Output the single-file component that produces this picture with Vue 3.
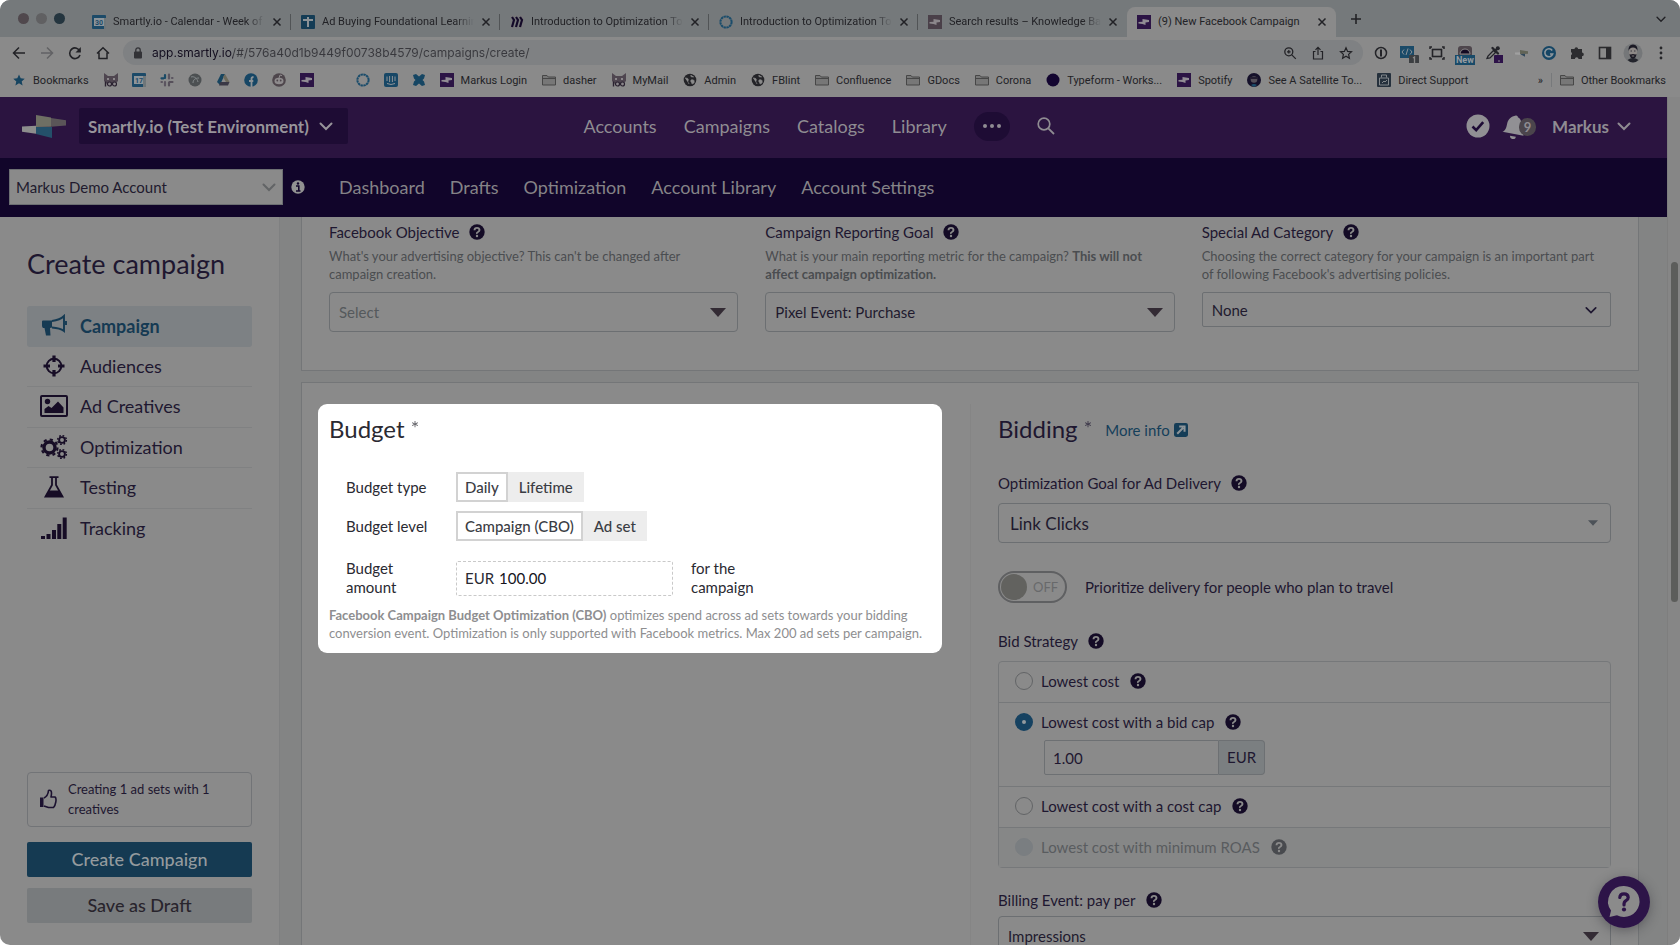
<script setup>
import { ref } from 'vue'

const tabs = [
  { icon: 'cal-30', label: 'Smartly.io - Calendar - Week of Jan' },
  { icon: 'plus-box', label: 'Ad Buying Foundational Learning' },
  { icon: 'miro', label: 'Introduction to Optimization Tools' },
  { icon: 'ring', label: 'Introduction to Optimization Tools' },
  { icon: 'smartly-dim', label: 'Search results – Knowledge Base' },
  { icon: 'smartly', label: '(9) New Facebook Campaign', active: true },
]

const bookmarks = [
  { icon: 'star-fill', label: 'Bookmarks' },
  { icon: 'cat' },
  { icon: 'cal-17' },
  { icon: 'slack' },
  { icon: 'ball' },
  { icon: 'drive' },
  { icon: 'facebook' },
  { icon: 'reddit' },
  { icon: 'smartly' },
  { icon: 'blank' },
  { icon: 'ring' },
  { icon: 'intercom' },
  { icon: 'confluence' },
  { icon: 'smartly', label: 'Markus Login' },
  { icon: 'folder', label: 'dasher' },
  { icon: 'cat', label: 'MyMail' },
  { icon: 'globe', label: 'Admin' },
  { icon: 'globe', label: 'FBlint' },
  { icon: 'folder', label: 'Confluence' },
  { icon: 'folder', label: 'GDocs' },
  { icon: 'folder', label: 'Corona' },
  { icon: 'disc', label: 'Typeform - Works...' },
  { icon: 'smartly', label: 'Spotify' },
  { icon: 'satellite', label: 'See A Satellite To...' },
  { icon: 'support', label: 'Direct Support' },
]

const extensions = ['onepass', 'code', 'capture', 'new', 'picker', 'smart-flag', 'grammar', 'puzzle', 'panel', 'avatar', 'kebab']

const steps = [
  { icon: 'horn', label: 'Campaign', active: true },
  { icon: 'target', label: 'Audiences' },
  { icon: 'image', label: 'Ad Creatives' },
  { icon: 'gears', label: 'Optimization' },
  { icon: 'flask', label: 'Testing' },
  { icon: 'bars', label: 'Tracking' },
]

const url = ref('app.smartly.io/#/576a40d1b9449f00738b4579/campaigns/create/')
const budgetType = ref('Daily')
const budgetLevel = ref('Campaign (CBO)')
const amount = ref('100.00')
const bidCap = ref('1.00')
const strategy = ref('bid')
const travel = ref(false)
</script>

<template>
  <svg class="defs" aria-hidden="true">
    <symbol id="cal-30" viewBox="0 0 14 14"><rect width="14" height="14" rx="1" fill="#1c4a68" /><rect x="2" y="3" width="10" height="8" fill="#8d9499" /><path d="M12 3h2v11h-2z" fill="#6f7679" /><text x="7" y="10" font-size="7" font-weight="700" text-anchor="middle" fill="#1c4a68">30</text></symbol>
    <symbol id="cal-17" viewBox="0 0 14 14"><rect width="14" height="14" rx="1" fill="#1c4a68" /><rect x="2" y="3" width="9" height="8" fill="#8d9499" /><path d="M11 3h3v11h-3z" fill="#6f7679" /><text x="7" y="10" font-size="7" font-weight="700" text-anchor="middle" fill="#1c4a68">17</text></symbol>
    <symbol id="plus-box" viewBox="0 0 14 14"><rect width="14" height="14" rx="1" fill="#143c55" /><path d="M7 2v10M2 5h10" stroke="#8c9296" stroke-width="2" /></symbol>
    <symbol id="miro" viewBox="0 0 14 14"><rect width="14" height="14" rx="1" fill="#77787a" /><path d="M2 2l2 3-2 7M6 2l2 3-2 7M10 2l2 3-2 7" stroke="#140a28" stroke-width="2.2" fill="none" /></symbol>
    <symbol id="ring" viewBox="0 0 14 14"><circle cx="7" cy="7" r="5.6" fill="none" stroke="#1a4c6b" stroke-width="2" stroke-dasharray="2.4 .5" /></symbol>
    <symbol id="smartly-dim" viewBox="0 0 14 14"><rect width="14" height="14" fill="#4a4049" /><path d="M1.500 7l4-.3V4l6.500 1v2l-3.500.4V10l-3-1-4-.5z" fill="#8b878b" /></symbol>
    <symbol id="smartly" viewBox="0 0 14 14"><rect width="14" height="14" fill="#2c1445" /><path d="M1.500 7l4-.3V4l6.500 1v2l-3.500.4V10l-3-1-4-.5z" fill="#918c94" /></symbol>
    <symbol id="star-fill" viewBox="0 0 14 14"><path d="M7 1.500l1.700 3.800 4 .4-3 2.700.9 4L7 10.300l-3.600 2.100.9-4-3-2.700 4-.4z" fill="#164460" /></symbol>
    <symbol id="cat" viewBox="0 0 14 14"><path d="M0 0l4 3h6l4-3v8l-3 3H3L0 8z" fill="#4f4650" /><path d="M3 5h2v2H3zM9 5h2v2H9z" fill="#8b878b" /><path d="M1.500 8.500v5" stroke="#2a2230" stroke-width="1.400" /><g fill="#8b878b" stroke="#2a2230" stroke-width="1.200"><circle cx="5.500" cy="11" r="2" /><circle cx="10.500" cy="11" r="2" /></g></symbol>
    <symbol id="slack" viewBox="0 0 14 14"><g stroke-width="2.200" stroke-linecap="round"><path d="M5 2v3M1.500 5.300h2" stroke="#1a4a66" /><path d="M9 1.500v4M12 5h.5" stroke="#5b5560" /><path d="M5 9v3.500M1.500 9h.5" stroke="#5b5560" /><path d="M9 9.500v3M9.500 9h3" stroke="#56505a" /></g></symbol>
    <symbol id="ball" viewBox="0 0 14 14"><circle cx="7" cy="7" r="6.500" fill="#4c5052" /><path d="M3 4c3-1 6 1 7 5M5 10c0-3 2-5 6-5" stroke="#83888a" fill="none" /></symbol>
    <symbol id="drive" viewBox="0 0 14 14"><path d="M5 1h4l-5 11-3-3z" fill="#174560" /><path d="M9 1l4.500 8H10L7 4z" fill="#6d6a5c" /><path d="M4.500 9h9L12 12.500H3z" fill="#3a3845" /></symbol>
    <symbol id="facebook" viewBox="0 0 14 14"><circle cx="7" cy="7" r="6.800" fill="#164665" /><path d="M7.500 14V5.500Q7.500 4 9.500 4M5 8h4.300" stroke="#8d9397" stroke-width="1.800" fill="none" /></symbol>
    <symbol id="reddit" viewBox="0 0 14 14"><circle cx="7" cy="7" r="6.800" fill="#4e464c" /><ellipse cx="7" cy="8" rx="4.500" ry="3.200" fill="#8e8b8d" /><circle cx="5.300" cy="7.500" r=".9" fill="#4e464c" /><circle cx="8.700" cy="7.500" r=".9" fill="#4e464c" /><path d="M7 5l1-3 2 .6" stroke="#8e8b8d" fill="none" /></symbol>
    <symbol id="blank" viewBox="0 0 14 14" />
    <symbol id="intercom" viewBox="0 0 14 14"><rect width="14" height="14" rx="2" fill="#174766" /><path d="M3 3.500v4.500M5.600 3v6M8.400 3v6M11 3.500v4.500M3 10.500q4 2 8 0" stroke="#8d9397" fill="none" /></symbol>
    <symbol id="confluence" viewBox="0 0 14 14"><path d="M1 2l3-1 3 2.500L10 1l3 1-1 3.500L10.500 7l1.500 1.500 1 3.500-3 1-3-2.500L4 13l-3-1 1-3.500L3.500 7 2 5.500z" fill="#164663" /></symbol>
    <symbol id="folder" viewBox="0 0 14 14"><path d="M.5 12V2.500h4.500l1.300 1.500h7.200v8z" fill="#777" stroke="#474747" /><path d="M.5 5.500h13" stroke="#474747" /></symbol>
    <symbol id="globe" viewBox="0 0 14 14"><circle cx="7" cy="7" r="6.300" fill="#242428" /><path d="M2 5c3 0 4 1 3 3s1 1 1 3M8 2c-1 2 1 2 3 2M8 7c2-1 4 0 3 3L9 11c0-2-2-2-1-4z" stroke="#8a8a8a" fill="#8a8a8a" stroke-width=".6" /></symbol>
    <symbol id="disc" viewBox="0 0 14 14"><circle cx="7" cy="7" r="6.500" fill="#130530" /></symbol>
    <symbol id="satellite" viewBox="0 0 14 14"><circle cx="7" cy="7" r="7" fill="#15102a" /><circle cx="7" cy="6.500" r="3.300" fill="#55505a" /><path d="M3 4h8v2H3z" fill="#221c30" /><path d="M4 12q3-2 6 0l-3 2z" fill="#1a4c6b" /></symbol>
    <symbol id="support" viewBox="0 0 14 14"><rect width="14" height="14" rx="1" fill="#25303c" /><path d="M2.500 5h9v7h-9zM4.500 4.500V2h5v2.500" stroke="#83888c" fill="none" /><path d="M5 10l2-2 1 1 2-2" stroke="#83888c" fill="none" /></symbol>

    <symbol id="x" viewBox="0 0 10 10"><path d="M1.500 1.500l7 7M8.500 1.500l-7 7" stroke="currentColor" stroke-width="1.500" /></symbol>
    <symbol id="plus" viewBox="0 0 14 14"><path d="M7 2v10M2 7h10" stroke="currentColor" stroke-width="1.600" /></symbol>
    <symbol id="chev" viewBox="0 0 14 14"><path d="M1.500 4.500L7 10l5.500-5.500" stroke="currentColor" stroke-width="2" fill="none" stroke-linecap="round" /></symbol>
    <symbol id="back" viewBox="0 0 14 14"><path d="M13 7H1.500M7 1.500L1.500 7 7 12.500" stroke="currentColor" stroke-width="1.500" fill="none" /></symbol>
    <symbol id="forward" viewBox="0 0 14 14"><path d="M1 7h11.500M7 1.500L12.500 7 7 12.500" stroke="currentColor" stroke-width="1.500" fill="none" /></symbol>
    <symbol id="reload" viewBox="0 0 14 14"><path d="M12 5.500A5.300 5.300 0 1 0 12 9" stroke="currentColor" stroke-width="1.600" fill="none" /><path d="M12.800 1v5.500H7.500z" fill="currentColor" /></symbol>
    <symbol id="home" viewBox="0 0 14 14"><path d="M1 7.500L7 1.800l6 5.700M3 6.500V12.500h8V6.500" stroke="currentColor" stroke-width="1.500" fill="none" /></symbol>
    <symbol id="lock" viewBox="0 0 14 14"><rect x="3" y="5.500" width="8" height="7" rx="1" fill="currentColor" /><path d="M4.800 6V4a2.200 2.200 0 0 1 4.400 0v2" stroke="currentColor" stroke-width="1.300" fill="none" /></symbol>
    <symbol id="zoom" viewBox="0 0 14 14"><circle cx="5.800" cy="5.800" r="4" stroke="currentColor" stroke-width="1.300" fill="none" /><path d="M8.800 8.800l4 4M4 5.800h3.600M5.800 4v3.600" stroke="currentColor" stroke-width="1.200" /></symbol>
    <symbol id="share" viewBox="0 0 14 14"><path d="M4.500 5.500H2.500v7.500h9V5.500h-2M7 9V1.500M4.500 3.800L7 1.300l2.500 2.500" stroke="currentColor" stroke-width="1.200" fill="none" /></symbol>
    <symbol id="star" viewBox="0 0 14 14"><path d="M7 1.800l1.600 3.600 3.900.4-2.900 2.600.8 3.900L7 10.300l-3.400 2 .8-3.900L1.500 5.800l3.900-.4z" fill="none" stroke="currentColor" stroke-width="1.200" /></symbol>

    <symbol id="onepass" viewBox="0 0 20 20"><circle cx="10" cy="10" r="5.500" stroke="#242428" stroke-width="1.500" fill="none" /><path d="M10 6.500v7" stroke="#242428" stroke-width="2" /></symbol>
    <symbol id="code" viewBox="0 0 20 20"><rect x="1" y="3" width="14" height="12" fill="#1a4a68" /><path d="M5 6.500L3 9l2 2.500M9 5.500L7 12M11 6.500L13 9l-2 2.500" stroke="#8a9298" fill="none" /><rect x="10" y="12" width="10" height="10" rx="1" fill="#3c3f42" /><path d="M14 15l1.500-1v6" stroke="#8a8a8a" stroke-width="1.300" fill="none" /></symbol>
    <symbol id="capture" viewBox="0 0 20 20"><path d="M3 6V4h2M15 4h2v2M17 14v2h-2M5 16H3v-2" stroke="#242428" stroke-width="1.500" fill="none" /><rect x="5.500" y="6.500" width="9" height="7" stroke="#242428" stroke-width="1.600" fill="none" /></symbol>
    <symbol id="new" viewBox="0 0 20 20"><rect x="3" y="3" width="14" height="12" rx="3" fill="#4e464c" /><path d="M5 11a5 5 0 0 1 10 0z" fill="#140a22" stroke="#898687" /></symbol>
    <symbol id="picker" viewBox="0 0 20 20"><path d="M4 15.500L5 13l5.500-5.500 2 2L7 15z" stroke="#24242a" stroke-width="1.300" fill="none" /><path d="M9.500 5l5.500 5.500M12 8l3-3" stroke="#24242a" stroke-width="2.400" stroke-linecap="round" /><circle cx="14.800" cy="5.200" r="2" fill="#24242a" /><rect x="11" y="12" width="10" height="10" rx="1" fill="#2d1249" /><path d="M15 18h2" stroke="#8a8a8a" /></symbol>
    <symbol id="smart-flag" viewBox="0 0 20 20"><path d="M4 9.500l6-.3V12l-6-.6z" fill="#a0a0a0" /><path d="M9 7l8 1.300v2.500L9 11z" fill="#626456" /><path d="M9 11l5-.3v3z" fill="#31485a" /></symbol>
    <symbol id="grammar" viewBox="0 0 20 20"><circle cx="10" cy="10" r="7" fill="#164665" /><path d="M13.200 7.500a4 4 0 1 0 .5 3.500H11" stroke="#8e979d" stroke-width="1.600" fill="none" /></symbol>
    <symbol id="puzzle" viewBox="0 0 20 20"><path d="M4 6h3.500a1.800 1.800 0 1 1 3.600 0H15v3.600a1.800 1.800 0 1 1 0 3.600V16h-3.500a1.800 1.800 0 0 0-3.600 0H4v-3.800a1.800 1.800 0 0 0 0-3.200z" fill="#2c2c2f" /></symbol>
    <symbol id="panel" viewBox="0 0 20 20"><rect x="4.500" y="4.500" width="11" height="11" stroke="#2a2a2d" stroke-width="1.600" fill="none" /><path d="M11 4h5v12h-5z" fill="#2a2a2d" /></symbol>
    <symbol id="avatar" viewBox="0 0 20 20"><circle cx="10" cy="10" r="9.500" fill="#757779" /><path d="M4.500 17q5.500-4 11 0-5.500 5-11 0z" fill="#23242c" /><ellipse cx="10" cy="9" rx="4" ry="5.500" fill="#8d8886" /><path d="M5.500 8Q5 1.500 10 1.500T14.500 8Q13.500 4.500 10 4.500T5.500 8zM6.500 11l1 .5q2.500-1 5 0l1-.5q-.5 4.500-3.500 4.500T6.500 11z" fill="#1b1924" /><path d="M7.500 8h1.500M11 8h1.500" stroke="#3b3840" /><path d="M8.800 13h2.400" stroke="#7d7877" /></symbol>
    <symbol id="kebab" viewBox="0 0 20 20"><circle cx="10" cy="5" r="1.400" fill="#262629" /><circle cx="10" cy="10" r="1.400" fill="#262629" /><circle cx="10" cy="15" r="1.400" fill="#262629" /></symbol>

    <symbol id="logo" viewBox="0 0 44 23"><path d="M0 11.500l14-.7v8L0 16.700z" fill="#8d8d8d" /><path d="M14 0l15 2.500v9.300L14 12z" fill="#6f6f64" /><path d="M29 3l15 2.200v5.400l-15 1.200z" fill="#5a5558" /><path d="M14 12h16v11l-16-4z" fill="#24506a" /></symbol>
    <symbol id="dots" viewBox="0 0 20 6"><circle cx="3" cy="3" r="2" fill="currentColor" /><circle cx="10" cy="3" r="2" fill="currentColor" /><circle cx="17" cy="3" r="2" fill="currentColor" /></symbol>
    <symbol id="search" viewBox="0 0 18 18"><circle cx="7" cy="7" r="5.800" stroke="currentColor" stroke-width="1.700" fill="none" /><path d="M11.300 11.300L17 17" stroke="currentColor" stroke-width="1.800" /></symbol>
    <symbol id="check" viewBox="0 0 24 24"><circle cx="12" cy="12" r="11.500" fill="#919094" /><path d="M6.500 12.500l3.700 3.700 7-8" stroke="#1d0b35" stroke-width="2.600" fill="none" /></symbol>
    <symbol id="bell" viewBox="0 0 22 26"><path d="M14 1.500a1.700 1.700 0 0 1 2 2c4 2 4 6 4 11l2 8L0 18.500c4-2 4-5 5-9s4-7 9-8zM8 22.500l6 1.200a3 3 0 0 1-6-1.200z" fill="#919094" /></symbol>
    <symbol id="info" viewBox="0 0 14 14"><circle cx="7" cy="7" r="6.700" fill="#929292" /><path d="M5 6h2.800v5M5 11h4.500" stroke="#11052a" stroke-width="1.600" fill="none" /><circle cx="7" cy="3.500" r="1.200" fill="#11052a" /></symbol>
    <symbol id="help" viewBox="0 0 16 16"><circle cx="8" cy="8" r="7.700" fill="currentColor" /><path d="M5.500 6.200Q5.600 3.900 8 3.900t2.500 2.200Q10.500 7.300 9 8T8 9.800" stroke="#8a8a8a" stroke-width="1.900" fill="none" /><circle cx="8" cy="12" r="1.200" fill="#8a8a8a" /></symbol>
    <symbol id="tri" viewBox="0 0 16 9"><path d="M0 0h16L8 9z" fill="currentColor" /></symbol>
    <symbol id="ext" viewBox="0 0 13 13"><rect width="13" height="13" rx="2" fill="#153d57" /><path d="M3 10l5.500-5.500M4.800 3.200h5v5" stroke="#8d9498" stroke-width="1.900" fill="none" /></symbol>

    <symbol id="horn" viewBox="0 0 28 24"><path d="M2 7.500Q2 6.500 3 6.500h9v7l-2 .5.500 7.500H6L4.500 14H3Q2 13 2 11.500z" fill="#153a53" /><path d="M12 7q8-1 12-5v15q-4-3-12-3.500M26 7v4" stroke="#153a53" stroke-width="1.900" fill="none" /></symbol>
    <symbol id="target" viewBox="0 0 28 24"><circle cx="14" cy="12" r="7.300" stroke="#170d26" stroke-width="2" fill="none" /><path d="M14 1.500v6.500M14 16v6.500M3.500 12H10M18 12h6.500" stroke="#170d26" stroke-width="3.200" /></symbol>
    <symbol id="image" viewBox="0 0 28 24"><rect x="1" y="2" width="26" height="20" rx="1" stroke="#170d26" stroke-width="2" fill="none" /><circle cx="7.500" cy="7.500" r="2.700" fill="#170d26" /><path d="M4.500 19v-4l4-3 3 2L18 7.500l5.500 6V19z" fill="#170d26" /></symbol>
    <symbol id="gears" viewBox="0 0 28 24"><circle cx="9.500" cy="12.500" r="5.500" stroke="#170d26" stroke-width="3.400" fill="none" /><circle cx="9.500" cy="12.500" r="8" stroke="#170d26" stroke-width="2.200" stroke-dasharray="3.140 3.140" fill="none" /><g stroke="#170d26" fill="none"><circle cx="22" cy="5" r="2.900" stroke-width="1.900" /><circle cx="22" cy="5" r="4.400" stroke-width="1.400" stroke-dasharray="1.730 1.730" /><circle cx="22" cy="19" r="2.900" stroke-width="1.900" /><circle cx="22" cy="19" r="4.400" stroke-width="1.400" stroke-dasharray="1.730 1.730" /></g></symbol>
    <symbol id="flask" viewBox="0 0 28 24"><path d="M9.500 2.200h9M12 2v8L5.500 21.500h17L16 10V2" stroke="#170d26" stroke-width="1.800" fill="none" /><path d="M8.800 15.500h10.400L23 22H5z" fill="#170d26" /></symbol>
    <symbol id="bars" viewBox="0 0 28 24"><path d="M1 20h4v3H1zM6.500 18h4v5h-4zM12 14h4v9h-4zM17.300 8h4v15h-4zM22.700 1.500h4V23h-4z" fill="#170d26" /></symbol>
    <symbol id="thumb" viewBox="0 0 18 20"><path d="M1 8.500h3.500V18H1z" fill="#1c1230" /><path d="M5 9q4-2 4.500-7.500 3-1 3 2.500 0 2-.5 4h4q1.500 1 .8 5t-2.300 5.500H9.500L5 17" stroke="#1c1230" stroke-width="1.600" fill="none" stroke-linejoin="round" /></symbol>
    <symbol id="chat" viewBox="0 0 52 52"><circle cx="26" cy="26" r="26" fill="#2d1448" /><path d="M26 10a15.500 15.500 0 1 1-7 29.300L11.500 41l1.500-6.500A15.500 15.500 0 0 1 26 10z" fill="#8b8b8b" /><path d="M21.800 21.500Q22 17.800 26 17.800t4.200 3.600q0 2-2.200 3.200t-2 4.400" stroke="#2d1448" stroke-width="3.200" fill="none" stroke-linecap="round" /><circle cx="26" cy="33.500" r="2.100" fill="#2d1448" /></symbol>
  </svg>

  <div class="window">
    <div class="tabbar">
      <div class="lights"><i class="red" /><i class="yellow" /><i class="green" /></div>
      <div class="tabs">
        <div v-for="(t, i) in tabs" :key="i" class="tab" :class="{ active: t.active, last: i === 4 }">
          <svg class="i14"><use :href="'#' + t.icon" /></svg>
          <span class="tab-label">{{ t.label }}</span>
          <button class="close" aria-label="Close tab"><svg class="i10"><use href="#x" /></svg></button>
        </div>
      </div>
      <button class="plain new-tab" aria-label="New tab"><svg class="i14"><use href="#plus" /></svg></button>
      <button class="plain tab-menu" aria-label="Tab list"><svg class="i10"><use href="#chev" /></svg></button>
    </div>

    <div class="toolbar">
      <button class="plain" aria-label="Back"><svg class="i14"><use href="#back" /></svg></button>
      <button class="plain faint" aria-label="Forward"><svg class="i14"><use href="#forward" /></svg></button>
      <button class="plain" aria-label="Reload"><svg class="i14"><use href="#reload" /></svg></button>
      <button class="plain" aria-label="Home"><svg class="i14"><use href="#home" /></svg></button>
      <div class="omnibox">
        <svg class="i14"><use href="#lock" /></svg>
        <input v-model="url" aria-label="Address" />
        <button class="plain" aria-label="Zoom"><svg class="i14"><use href="#zoom" /></svg></button>
        <button class="plain" aria-label="Share"><svg class="i14"><use href="#share" /></svg></button>
        <button class="plain" aria-label="Bookmark"><svg class="i14"><use href="#star" /></svg></button>
      </div>
      <div class="exts">
        <button v-for="e in extensions" :key="e" class="plain ext" :aria-label="e">
          <svg class="i20"><use :href="'#' + e" /></svg>
          <span v-if="e === 'new'" class="new-badge">New</span>
        </button>
      </div>
    </div>

    <div class="bookmarks">
      <a v-for="(b, i) in bookmarks" :key="i" href="#" class="bm">
        <svg class="i14"><use :href="'#' + b.icon" /></svg><span v-if="b.label">{{ b.label }}</span>
      </a>
      <a href="#" class="bm more">»</a>
      <a href="#" class="bm other"><svg class="i14"><use href="#folder" /></svg><span>Other Bookmarks</span></a>
    </div>

    <div class="page">
      <div class="app">
        <header class="top">
          <svg class="logo"><use href="#logo" /></svg>
          <button class="env">Smartly.io (Test Environment)<svg class="i14"><use href="#chev" /></svg></button>
          <nav class="main-nav">
            <a href="#">Accounts</a><a href="#">Campaigns</a><a href="#">Catalogs</a><a href="#">Library</a>
            <button class="dots" aria-label="More"><svg><use href="#dots" /></svg></button>
            <button class="plain search" aria-label="Search"><svg><use href="#search" /></svg></button>
          </nav>
          <div class="user">
            <svg class="check"><use href="#check" /></svg>
            <button class="plain bell" aria-label="Notifications"><svg><use href="#bell" /></svg><span>9</span></button>
            <button class="plain name">Markus<svg class="i14"><use href="#chev" /></svg></button>
          </div>
        </header>

        <div class="sub">
          <div class="select account">
            <select aria-label="Account"><option>Markus Demo Account</option></select>
            <svg class="i14"><use href="#chev" /></svg>
          </div>
          <svg class="i14 info"><use href="#info" /></svg>
          <nav>
            <a href="#">Dashboard</a><a href="#">Drafts</a><a href="#">Optimization</a><a href="#">Account Library</a><a href="#">Account Settings</a>
          </nav>
        </div>

        <div class="body">
          <aside>
            <h1>Create campaign</h1>
            <nav class="steps">
              <a v-for="s in steps" :key="s.label" href="#" :class="{ active: s.active }">
                <svg><use :href="'#' + s.icon" /></svg>{{ s.label }}
              </a>
            </nav>
            <div class="actions">
              <div class="note"><svg><use href="#thumb" /></svg><p>Creating 1 ad sets with 1 creatives</p></div>
              <button class="btn primary">Create Campaign</button>
              <button class="btn">Save as Draft</button>
            </div>
          </aside>

          <main>
            <section class="card goals">
              <div class="field">
                <label for="objective">Facebook Objective <svg class="help"><use href="#help" /></svg></label>
                <p>What's your advertising objective? This can't be changed after campaign creation.</p>
                <div class="select">
                  <select id="objective" class="muted"><option>Select</option></select>
                  <svg class="tri"><use href="#tri" /></svg>
                </div>
              </div>
              <div class="field">
                <label for="goal">Campaign Reporting Goal <svg class="help"><use href="#help" /></svg></label>
                <p>What is your main reporting metric for the campaign? <b>This will not affect campaign optimization.</b></p>
                <div class="select">
                  <select id="goal"><option>Pixel Event: Purchase</option></select>
                  <svg class="tri"><use href="#tri" /></svg>
                </div>
              </div>
              <div class="field">
                <label for="category">Special Ad Category <svg class="help"><use href="#help" /></svg></label>
                <p>Choosing the correct category for your campaign is an important part of following Facebook's advertising policies.</p>
                <div class="select short">
                  <select id="category"><option>None</option></select>
                  <svg class="i12"><use href="#chev" /></svg>
                </div>
              </div>
            </section>

            <section class="card split">
              <div class="left">
                <div class="budget">
                  <h2>Budget <sup>*</sup></h2>
                  <div class="row">
                    <span class="row-label">Budget type</span>
                    <div class="toggle">
                      <button v-for="o in ['Daily', 'Lifetime']" :key="o" :class="{ on: budgetType === o }" @click="budgetType = o">{{ o }}</button>
                    </div>
                  </div>
                  <div class="row">
                    <span class="row-label">Budget level</span>
                    <div class="toggle">
                      <button v-for="o in ['Campaign (CBO)', 'Ad set']" :key="o" :class="{ on: budgetLevel === o }" @click="budgetLevel = o">{{ o }}</button>
                    </div>
                  </div>
                  <div class="row amount">
                    <label class="row-label" for="amount">Budget amount</label>
                    <div class="money"><span>EUR</span><input id="amount" v-model="amount" /></div>
                    <span class="suffix">for the campaign</span>
                  </div>
                  <p><b>Facebook Campaign Budget Optimization (CBO)</b> optimizes spend across ad sets towards your bidding conversion event. Optimization is only supported with Facebook metrics. Max 200 ad sets per campaign.</p>
                </div>
              </div>

              <div class="right">
                <h2>Bidding <sup>*</sup><a href="#">More info <svg><use href="#ext" /></svg></a></h2>
                <label for="opt" class="lbl">Optimization Goal for Ad Delivery <svg class="help"><use href="#help" /></svg></label>
                <div class="select large">
                  <select id="opt"><option>Link Clicks</option></select>
                  <svg class="tri small"><use href="#tri" /></svg>
                </div>
                <label class="switch">
                  <input v-model="travel" type="checkbox" />
                  <span class="track"><i />OFF</span>
                  Prioritize delivery for people who plan to travel
                </label>
                <div class="lbl">Bid Strategy <svg class="help"><use href="#help" /></svg></div>
                <div class="strategies">
                  <div class="opt"><label><input v-model="strategy" type="radio" name="s" value="low" />Lowest cost <svg class="help"><use href="#help" /></svg></label></div>
                  <div class="opt">
                    <label><input v-model="strategy" type="radio" name="s" value="bid" />Lowest cost with a bid cap <svg class="help"><use href="#help" /></svg></label>
                    <div class="cap"><input v-model="bidCap" aria-label="Bid cap" /><span>EUR</span></div>
                  </div>
                  <div class="opt"><label><input v-model="strategy" type="radio" name="s" value="cost" />Lowest cost with a cost cap <svg class="help"><use href="#help" /></svg></label></div>
                  <div class="opt off"><label><input v-model="strategy" type="radio" name="s" value="roas" disabled />Lowest cost with minimum ROAS <svg class="help"><use href="#help" /></svg></label></div>
                </div>
                <label for="billing" class="lbl billing">Billing Event: pay per <svg class="help"><use href="#help" /></svg></label>
                <div class="select">
                  <select id="billing"><option>Impressions</option></select>
                  <svg class="tri"><use href="#tri" /></svg>
                </div>
              </div>
            </section>
          </main>
        </div>
      </div>
      <div class="scroll"><i /></div>
      <button class="plain fab" aria-label="Help"><svg><use href="#chat" /></svg></button>
    </div>
  </div>
</template>

<style>
html,
body {
  background: #fff;
}
</style>

<style scoped>
* {
  box-sizing: border-box;
}
.defs {
  position: absolute;
  width: 0;
  height: 0;
}
svg {
  display: block;
  flex: none;
  overflow: visible;
}
button,
input,
select {
  font: inherit;
  color: inherit;
  margin: 0;
  outline: none;
}
a {
  color: inherit;
  text-decoration: none;
}
p,
h1,
h2 {
  margin: 0;
  font-weight: 400;
}
.window {
  height: 100vh;
  display: flex;
  flex-direction: column;
  overflow: hidden;
  border-radius: 10px;
  background: #8a8a8a;
  color: #1e1730;
  font-family: Lato, "Liberation Sans", sans-serif;
  font-size: 15px;
}
.i10 { width: 10px; height: 10px; }
.i12 { width: 12px; height: 12px; }
.i14 { width: 14px; height: 14px; }
.i20 { width: 20px; height: 20px; }
.plain {
  border: 0;
  padding: 0;
  background: none;
  display: flex;
  align-items: center;
}

/* browser chrome */
.tabbar,
.toolbar,
.bookmarks {
  flex: none;
  display: flex;
  align-items: center;
  font-family: Roboto, "Liberation Sans", sans-serif;
  font-size: 11px;
  color: #222226;
}
.tabbar {
  height: 37px;
  background: #75797b;
  align-items: stretch;
}
.lights {
  width: 82px;
  flex: none;
  padding-left: 18px;
  display: flex;
  gap: 7px;
  align-items: center;
}
.lights i {
  width: 11px;
  height: 11px;
  border-radius: 50%;
  background: #50484d;
}
.lights .yellow { background: #606062; }
.lights .green { background: #24353f; }
.tabs {
  display: flex;
  padding-top: 7px;
}
.tab {
  width: 209px;
  display: flex;
  align-items: center;
  gap: 7px;
  padding: 0 9px 1px 10px;
  position: relative;
}
.tab::after {
  content: "";
  position: absolute;
  right: 0;
  top: 7px;
  width: 1px;
  height: 16px;
  background: #515456;
}
.tab.last::after,
.tab.active::after {
  display: none;
}
.tab.active {
  background: #8a8a8a;
  border-radius: 8px 8px 0 0;
}
.tab-label {
  flex: 1;
  overflow: hidden;
  white-space: nowrap;
  mask-image: linear-gradient(90deg, #000 88%, transparent);
}
.tab.active .tab-label {
  mask-image: none;
}
.close {
  border: 0;
  padding: 0;
  background: none;
}
.new-tab { margin-left: 13px; }
.tab-menu { margin: 0 14px 0 auto; }
.toolbar {
  height: 31px;
  padding: 0 9px 0 12px;
  gap: 14px;
}
.faint { color: #626265; }
.omnibox {
  flex: 1;
  height: 25px;
  margin-left: -1px;
  display: flex;
  align-items: center;
  gap: 14px;
  padding: 0 10px 0 8px;
  border-radius: 13px;
  background: #7f8183;
}
.omnibox > svg { color: #333337; }
.omnibox input {
  flex: 1;
  border: 0;
  padding: 0;
  margin-left: -7px;
  font-family: Inter, "Liberation Sans", sans-serif;
  font-size: 12px;
  color: transparent;
  background: linear-gradient(90deg, #120d1e 81px, #38383d 81px);
  background-clip: text;
}
.exts {
  display: flex;
  gap: 8px;
  margin-left: -6px;
}
.ext { position: relative; }
.new-badge {
  position: absolute;
  left: 0;
  top: 12px;
  padding: 0 1px;
  background: #194a68;
  color: #959ba0;
  font-size: 9px;
  line-height: 10px;
  font-weight: 700;
}
.bookmarks {
  height: 29px;
  padding: 0 13px 5px 12px;
  gap: 14px;
  white-space: nowrap;
}
.bm {
  display: flex;
  align-items: center;
  gap: 7px;
}
.bm span { padding-right: 1px; }
.more { margin-left: auto; }
.other {
  margin-left: -6px;
  padding-left: 8px;
  border-left: 1px solid #77797b;
}

/* page */
.page {
  flex: 1;
  min-height: 0;
  display: flex;
  position: relative;
}
.app {
  flex: 1;
  min-width: 0;
  display: flex;
  flex-direction: column;
}
.scroll {
  width: 13px;
  position: relative;
  background: #868686;
  border-left: 1px solid #7e7e7e;
}
.scroll i {
  position: absolute;
  left: 3px;
  top: 165px;
  width: 7px;
  height: 340px;
  border-radius: 4px;
  background: #5c5d5b;
}
.top {
  height: 61px;
  flex: none;
  display: flex;
  align-items: center;
  padding: 0 36px 3px 22px;
  background: #2b1440;
  color: #8f8c92;
  font-size: 18px;
  position: relative;
}
.logo { width: 44px; height: 23px; }
.env {
  height: 36px;
  margin-left: 13px;
  padding: 0 15px 0 9px;
  display: flex;
  align-items: center;
  gap: 10px;
  border: 0;
  border-radius: 2px;
  background: #1e0c34;
  font-size: 17px;
  font-weight: 700;
  color: #97949a;
}
.main-nav {
  position: absolute;
  left: 35%;
  display: flex;
  align-items: center;
  gap: 27px;
}
.dots {
  width: 36px;
  height: 29px;
  border: 0;
  padding: 0;
  border-radius: 15px;
  background: #1e0c34;
  display: grid;
  place-items: center;
}
.dots svg { width: 20px; height: 6px; }
.search svg { width: 18px; height: 18px; }
.user {
  margin-left: auto;
  display: flex;
  align-items: center;
}
.check { width: 24px; height: 24px; }
.bell {
  position: relative;
  margin-left: 12px;
}
.bell svg { width: 22px; height: 25px; }
.bell span {
  position: absolute;
  left: 17px;
  top: 4px;
  width: 17px;
  height: 18px;
  border-radius: 9px;
  background: #4b454c;
  font-size: 13px;
  font-weight: 700;
  line-height: 18px;
  text-align: center;
}
.name {
  margin-left: 28px;
  gap: 8px;
  font-weight: 700;
  font-size: 17px;
}
.sub {
  height: 59px;
  flex: none;
  display: flex;
  align-items: center;
  padding: 0 0 2px 9px;
  background: #11052a;
  color: #858387;
}
.sub nav {
  display: flex;
  gap: 25px;
  margin-left: 34px;
  font-size: 18px;
}
.info { margin-left: 8px; }
.select {
  position: relative;
  display: flex;
  align-items: center;
}
.select select {
  appearance: none;
  width: 100%;
  height: 40px;
  padding: 0 36px 0 9px;
  border: 1px solid #6c6f72;
  border-radius: 4px;
  background: #8a8a8a;
  color: #211a2e;
}
.select svg {
  position: absolute;
  right: 12px;
  pointer-events: none;
}
.select.account { width: 274px; }
.account select {
  height: 36px;
  border-radius: 0;
  padding-left: 6px;
}
.account svg {
  right: 7px;
  color: #626466;
}
.body {
  flex: 1;
  min-height: 0;
  display: flex;
}
aside {
  width: 279px;
  flex: none;
  padding: 29px 27px 22px;
  display: flex;
  flex-direction: column;
}
h1 {
  font-size: 27px;
  line-height: 36px;
}
.steps { margin-top: 24px; }
.steps a {
  height: 40px;
  display: flex;
  align-items: center;
  gap: 12px;
  padding: 0 0 2px 13px;
  font-size: 18px;
  border-bottom: 1px solid #808182;
}
.steps a:nth-child(odd) { height: 41px; }
.steps a:last-child { border: 0; }
.steps .active {
  background: #7d8184;
  border: 0;
  border-radius: 3px;
  color: #153a53;
  font-weight: 700;
}
.steps svg { width: 28px; height: 24px; }
.actions { margin-top: auto; }
.note {
  height: 55px;
  display: flex;
  align-items: center;
  gap: 11px;
  padding: 0 36px 2px 11px;
  border: 1px solid #727477;
  border-radius: 4px;
  font-size: 13px;
  line-height: 20px;
}
.note svg { width: 18px; height: 20px; }
.btn {
  width: 100%;
  height: 35px;
  margin-top: 11px;
  padding: 0 0 2px;
  border: 0;
  border-radius: 2px;
  background: #787b7d;
  color: #28242c;
  font-size: 18px;
  font-weight: 500;
  display: block;
}
.btn.primary {
  margin-top: 15px;
  background: #153a52;
  color: #949a9e;
}
main {
  flex: 1;
  min-width: 0;
  overflow: hidden;
  padding: 0 28px 0 21px;
  background: #838484;
  border-left: 1px solid #7f8081;
}
.card {
  background: #8a8a8a;
  border: 1px solid #747678;
}
.goals {
  display: grid;
  grid-template-columns: repeat(3, 1fr);
  gap: 27px;
  padding: 5px 27px 38px;
  border-top: 0;
}
.field label,
.lbl {
  display: flex;
  align-items: center;
  gap: 10px;
  line-height: 20px;
}
.help {
  width: 16px;
  height: 16px;
  color: #140b26;
}
.field p {
  margin: 5px 0 9px;
  padding-right: 12px;
  font-size: 13px;
  line-height: 18px;
  color: #4a4d50;
}
.muted.muted { color: #55595c; }
.tri {
  width: 16px;
  height: 9px;
  color: #332b34;
}
.short select { height: 35px; border-radius: 2px; }
.short svg { right: 14px; }
.split {
  margin-top: 11px;
  display: grid;
  grid-template-columns: 1fr 1fr;
}
.left { padding: 21px 28px 21px 16px; }
.budget {
  padding: 9px 11px 11px;
  border-radius: 9px;
  background: #fff;
  color: #2a2a32;
}
h2 {
  font-size: 24px;
  line-height: 32px;
}
sup {
  font-size: 20px;
  line-height: 0;
  vertical-align: 3px;
  opacity: .75;
}
.row {
  display: flex;
  align-items: center;
  padding-left: 17px;
  margin-top: 9px;
}
h2 + .row { margin-top: 27px; }
.row-label {
  width: 110px;
  padding-right: 40px;
  white-space: nowrap;
}
.toggle {
  display: flex;
  background: #ededed;
}
.toggle button {
  height: 30px;
  padding: 0 11px;
  border: 0;
  background: none;
  color: #3b3d44;
  font-weight: 500;
}
.toggle .on {
  padding: 0 7px;
  border: 2px solid #d2d2d2;
  background: #fff;
}
.amount {
  margin-top: 18px;
  line-height: 19px;
}
.amount .row-label,
.suffix { white-space: normal; }
.money {
  width: 217px;
  height: 35px;
  display: flex;
  align-items: center;
  gap: 5px;
  padding: 0 8px;
  border: 1px dashed #c9c9c9;
  border-radius: 2px;
}
.money input {
  border: 0;
  padding: 0;
  min-width: 0;
  flex: 1;
  background: none;
  color: #14141c;
}
.suffix {
  width: 80px;
  margin-left: 18px;
}
.budget p {
  margin-top: 9px;
  font-size: 13px;
  line-height: 18px;
  color: #8e8e90;
}
.right {
  margin-top: 21px;
  padding: 9px 27px 0;
  border-left: 1px solid #858585;
}
.right h2 a {
  display: inline-flex;
  align-items: center;
  gap: 4px;
  margin-left: 13px;
  font-size: 15px;
  line-height: 20px;
  color: #153f5a;
  vertical-align: 2px;
}
.right h2 svg { width: 14px; height: 14px; }
.right h2 + .lbl { margin: 28px 0 10px; }
.large select {
  padding-left: 11px;
  font-size: 17px;
}
.tri.small {
  width: 10px;
  height: 6px;
  right: 13px;
  color: #4c5258;
}
.switch {
  position: relative;
  display: flex;
  align-items: center;
  gap: 18px;
  margin: 28px 0 28px;
}
.switch input {
  position: absolute;
  opacity: 0;
}
.track {
  width: 69px;
  height: 32px;
  display: flex;
  align-items: center;
  gap: 6px;
  padding-left: 1px;
  border: 2px solid #5f6062;
  border-radius: 16px;
  font-size: 13px;
  color: #68696b;
}
.track i {
  width: 26px;
  height: 26px;
  border-radius: 50%;
  background: #62625f;
}
.strategies {
  margin-top: 10px;
  border: 1px solid #76787a;
  border-radius: 4px;
}
.opt {
  padding: 9px 16px 11px;
  border-bottom: 1px solid #76787a;
}
.opt:last-child {
  padding-bottom: 10px;
  border: 0;
}
.opt label {
  display: flex;
  align-items: center;
  height: 20px;
}
.opt label svg { margin-left: 11px; }
.opt label input {
  appearance: none;
  width: 18px;
  height: 18px;
  margin-right: 8px;
  border: 1px solid #626466;
  border-radius: 50%;
}
.opt label input:checked {
  border: 7px solid #164261;
  background: #949a9e;
}
.opt.off {
  color: #595c5f;
  background: #868787;
}
.off .help { color: #484a4e; }
.off label input:disabled {
  border-color: #7a7e81;
  background: #7a7e81;
}
.cap {
  display: flex;
  height: 35px;
  margin: 8px 0 0 29px;
}
.cap input {
  width: 175px;
  padding: 0 8px;
  border: 1px solid #6d7073;
  border-radius: 2px 0 0 2px;
  background: none;
}
.cap span {
  padding: 0 8px;
  line-height: 33px;
  border: 1px solid #6d7073;
  border-left: 0;
  border-radius: 0 4px 4px 0;
  background: #7b7f81;
}
.billing { margin: 22px 0 6px; }
.fab {
  position: absolute;
  right: 30px;
  bottom: 17px;
  border-radius: 50%;
  box-shadow: 0 3px 12px rgba(20, 20, 30, .35);
}
.fab svg { width: 52px; height: 52px; }
</style>
